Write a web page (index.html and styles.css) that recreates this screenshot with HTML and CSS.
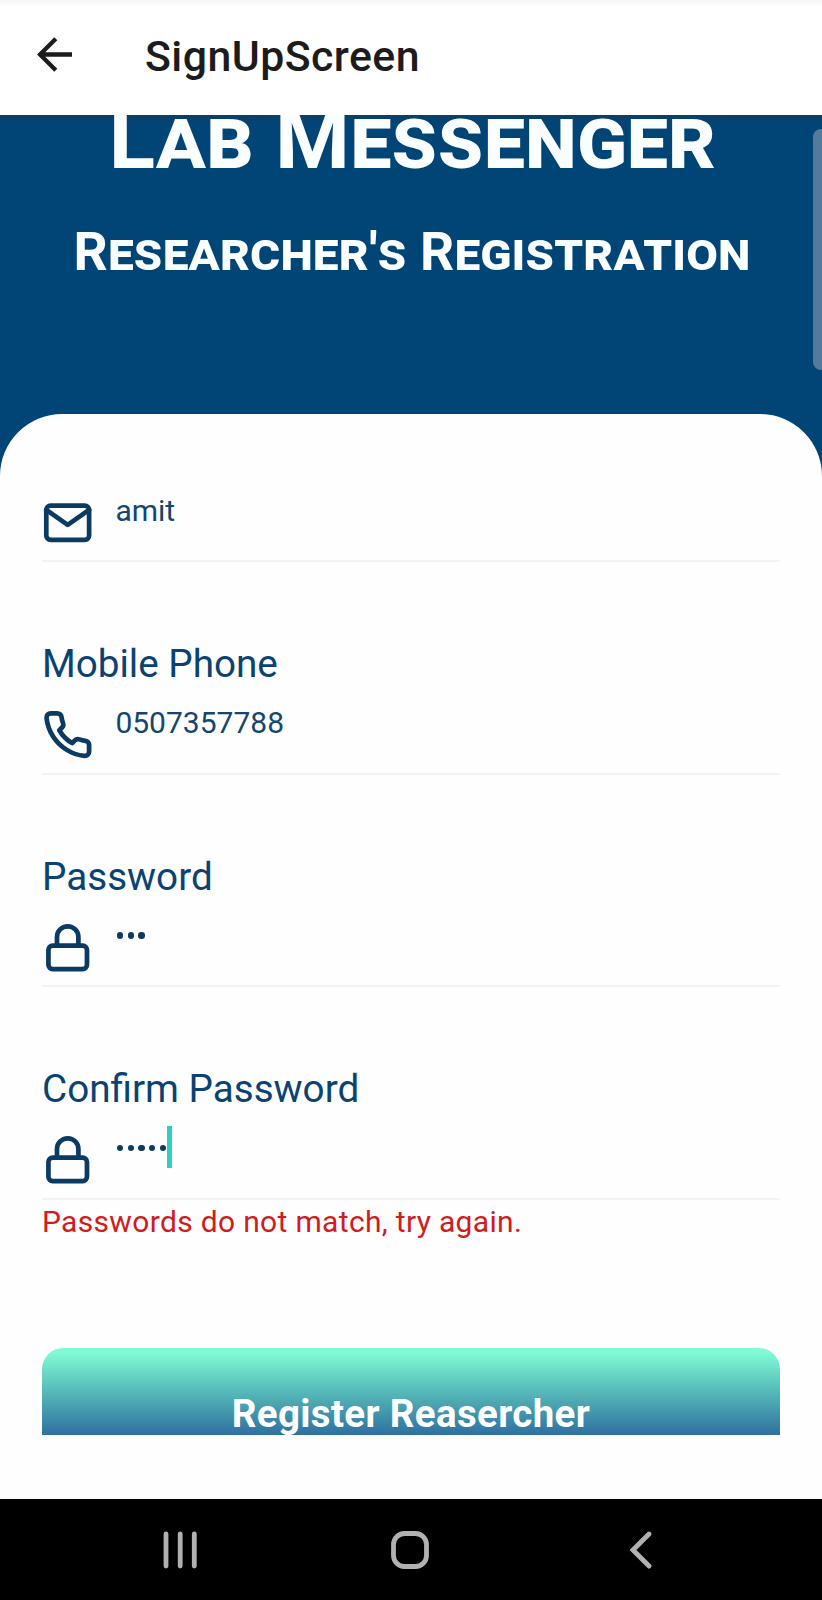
FILE: index.html
```html
<!DOCTYPE html>
<html lang="en">
<head>
<meta charset="utf-8">
<title>SignUpScreen</title>
<link rel="stylesheet" href="styles.css">
</head>
<body>
<div class="screen">
  <header class="appbar">
    <svg class="back" viewBox="0 0 36 36"><path d="M35 17.5H3.5M18.8 1.8 3 17.5 18.8 33.2" /></svg>
    <h1 class="appbar-title">SignUpScreen</h1>
  </header>
  <section class="hero">
    <div class="brand">Lab Messenger</div>
    <div class="subtitle">Researcher's Registration</div>
    <span class="scrollbar"></span>
  </section>
  <main class="sheet">
    <div class="field first">
      <div class="row">
        <svg class="icon" viewBox="0 0 24 24"><path d="M4 4h16c1.100 0 2 .9 2 2v12c0 1.100-.9 2-2 2H4c-1.100 0-2-.9-2-2V6c0-1.100.9-2 2-2z"/><path d="M22 6l-10 7L2 6"/></svg>
        <span class="value">amit</span>
      </div>
    </div>
    <div class="field">
      <div class="label">Mobile Phone</div>
      <div class="row">
        <svg class="icon" viewBox="0 0 24 24"><path d="M22 16.920v3a2 2 0 0 1-2.180 2 19.790 19.790 0 0 1-8.630-3.070 19.500 19.500 0 0 1-6-6 19.790 19.790 0 0 1-3.070-8.670A2 2 0 0 1 4.110 2h3a2 2 0 0 1 2 1.720 12.840 12.840 0 0 0 .7 2.810 2 2 0 0 1-.45 2.110L8.090 9.910a16 16 0 0 0 6 6l1.270-1.270a2 2 0 0 1 2.110-.45 12.840 12.840 0 0 0 2.810.7A2 2 0 0 1 22 16.920z"/></svg>
        <span class="value">0507357788</span>
      </div>
    </div>
    <div class="field">
      <div class="label">Password</div>
      <div class="row">
        <svg class="icon" viewBox="0 0 24 24"><rect x="3" y="11" width="18" height="11" rx="2"/><path d="M7 11V7a5 5 0 0 1 10 0v4"/></svg>
        <span class="value dots"><i></i><i></i><i></i></span>
      </div>
    </div>
    <div class="field">
      <div class="label">Confirm Password</div>
      <div class="row">
        <svg class="icon" viewBox="0 0 24 24"><rect x="3" y="11" width="18" height="11" rx="2"/><path d="M7 11V7a5 5 0 0 1 10 0v4"/></svg>
        <span class="value dots"><i></i><i></i><i></i><i></i><i></i><b class="caret"></b></span>
      </div>
    </div>
    <div class="error">Passwords do not match, try again.</div>
    <div class="button"><span>Register Reasercher</span></div>
  </main>
  <nav class="navbar">
    <svg viewBox="0 0 36 38"><path d="M3 3v32M17.200 3v32M31.300 3v32"/></svg>
    <svg viewBox="0 0 38 38"><rect x="2.500" y="2.500" width="33" height="33" rx="11"/></svg>
    <svg class="nav-back" viewBox="0 0 22 38"><path d="M19 3 3 19l16 16"/></svg>
  </nav>
</div>
</body>
</html>
```
FILE: styles.css
```css
* { box-sizing: border-box; }

body {
  margin: 0;
  font-family: Roboto, sans-serif;
}

.screen {
  width: 822px;
  height: 1600px;
  display: flex;
  flex-direction: column;
  background: #014576;
  overflow: hidden;
}

.appbar {
  height: 115px;
  flex: none;
  display: flex;
  align-items: center;
  padding-left: 37px;
  background: linear-gradient(#f6f6f6, #fff 6px);
}

.back {
  width: 36px;
  height: 36px;
  fill: none;
  stroke: #1c1c1e;
  stroke-width: 4.300;
  margin-bottom: 5px;
}

.appbar-title {
  margin: 0 0 3px 72px;
  font-size: 42.800px;
  line-height: 50px;
  font-weight: 500;
  letter-spacing: 0.450px;
  color: #1c1c1e;
}

.hero {
  position: relative;
  height: 299px;
  flex: none;
  overflow: hidden;
  background: linear-gradient(#0c3f68, #014576 10px);
  color: #fafeff;
  text-align: center;
  font-weight: 700;
  font-variant-caps: small-caps;
  white-space: nowrap;
}

.brand {
  margin-top: -26px;
  padding-left: 3px;
  font-size: 85.600px;
  line-height: 100px;
  letter-spacing: 0.150px;
}

.subtitle {
  margin-top: 31px;
  padding-left: 2px;
  font-size: 53.500px;
  line-height: 64px;
  letter-spacing: 0.150px;
}

/* Scroll thumb overlapping the right edge of the header */
.scrollbar {
  position: absolute;
  right: 0;
  top: 14px;
  width: 9px;
  height: 241px;
  border-radius: 8px 0 0 8px;
  background: #527b9c;
}

.sheet {
  height: 1085px;
  flex: none;
  padding: 0 42px;
  border-radius: 62px 62px 0 0;
  background: #fefefe;
  color: #0a4272;
}

.field {
  height: 212.500px;
  padding-top: 79px;
  border-bottom: 2px solid #f3f3f3;
}

.field.first {
  height: 148px;
  padding-top: 73px;
}

.label {
  font-size: 38.650px;
  line-height: 46px;
}

.row {
  display: flex;
  align-items: flex-start;
  padding-top: 22px;
}

.field.first .row { padding-top: 10px; }

.icon {
  width: 51.400px;
  height: 51.400px;
  fill: none;
  stroke: #0b3a63;
  stroke-width: 2.200;
  stroke-linecap: round;
  stroke-linejoin: round;
}

.value {
  margin-left: 22px;
  margin-top: -4px;
  font-size: 30px;
  line-height: 36px;
  color: #14466f;
}

.dots {
  position: relative;
  display: flex;
  align-items: center;
  gap: 4.200px;
  height: 36px;
  padding-left: 1.500px;
}

.dots i {
  width: 6.500px;
  height: 6.500px;
  border-radius: 50%;
  background: #0b3a63;
}

.caret {
  position: absolute;
  left: 52px;
  top: -4px;
  width: 5px;
  height: 42px;
  background: #2dcfc0;
}

.error {
  margin-top: 4px;
  font-size: 30px;
  line-height: 36px;
  letter-spacing: 0.330px;
  color: #d01c20;
}

.button {
  margin-top: 108px;
  height: 87px;
  padding-top: 43px;
  border-radius: 21px 21px 0 0;
  background: linear-gradient(#7ffad4 6%, #5cc5bd 42%, #2f70a0);
  overflow: hidden;
  text-align: center;
  font-size: 38.500px;
  line-height: 46px;
  letter-spacing: 0.350px;
  font-weight: 700;
  color: #fff;
}

.navbar {
  height: 101px;
  flex: none;
  display: flex;
  align-items: flex-start;
  padding: 31.500px 0 0 162.500px;
  background: #000;
}

.navbar svg {
  flex: none;
  width: 38px;
  height: 38px;
  margin-right: 191px;
  fill: none;
  stroke: #b2b1b2;
  stroke-width: 4.800;
  stroke-linecap: round;
}

.navbar svg:first-child { width: 36px; margin-right: 192px; }

.navbar .nav-back { width: 22px; margin: 0 0 0 10px; }
```
